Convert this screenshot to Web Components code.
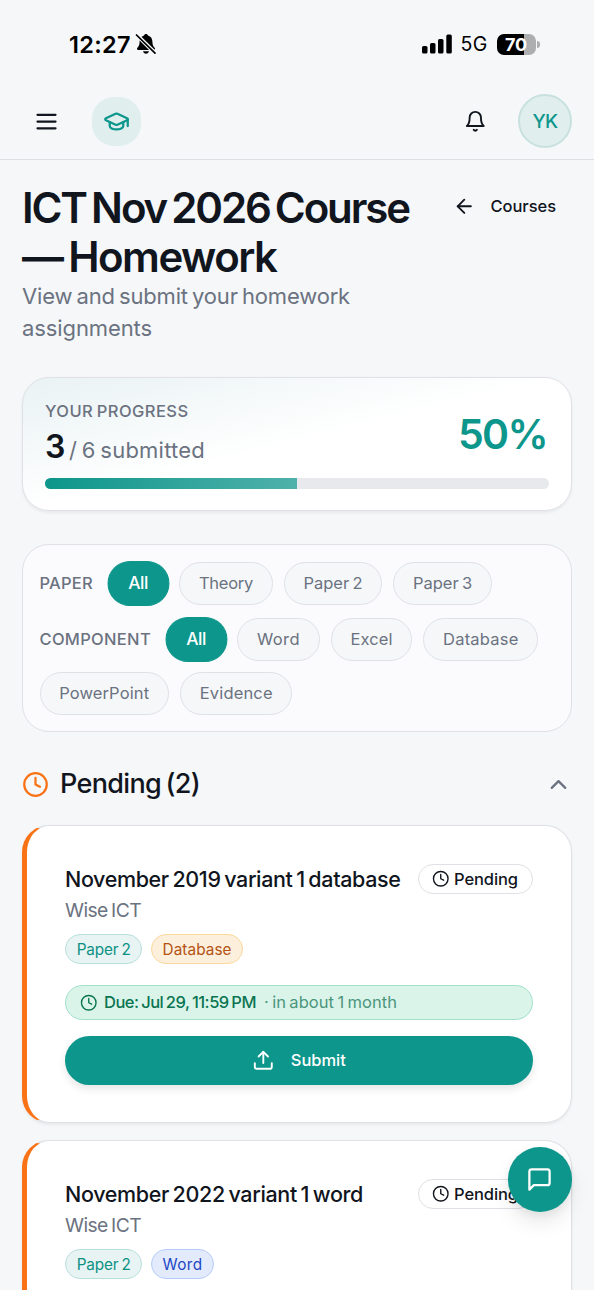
<!DOCTYPE html>
<html lang="en">
<head>
    <meta charset="UTF-8">
    <meta name="viewport" content="width=device-width, initial-scale=1.0">
    <title>Homework</title>
    <style>
        :root{
            --teal: #0d968b;
            --ink: #11151d;
            --muted: #6b7280;
            --line: #dfe1e6;
        }
        body{
            margin: 0;
            height: 1290px;
            overflow: hidden;
            position: relative;
            background: #f5f7f9;
            color: var(--ink);
            font-family: Inter, "Liberation Sans", sans-serif;
        }
        main{
            display: flex;
            flex-direction: column;
            padding: 23px 22px 0;
        }
        page-title{ margin-bottom: 33.5px; }
        progress-card{ margin-bottom: 33px; }
        filter-panel{ margin-bottom: 31px; }
        section-head{ margin-bottom: 20px; }
        homework-card{ margin-bottom: 17px; }
        /* the last card runs on under the bottom edge */
        homework-card:last-child{ height: 150px; margin-bottom: 0; border-bottom: 0; border-radius: 27px 27px 0 0; }
    </style>
</head>
<body>
    <status-bar></status-bar>
    <app-header></app-header>
    <main>
        <page-title></page-title>
        <progress-card></progress-card>
        <filter-panel>
            <filter-row>
                <fit-text size="16.5" w="53.5" weight="500">PAPER</fit-text>
                <filter-chip active w="20">All</filter-chip>
                <filter-chip w="54">Theory</filter-chip>
                <filter-chip w="59">Paper 2</filter-chip>
                <filter-chip w="59">Paper 3</filter-chip>
            </filter-row>
            <filter-row>
                <fit-text size="16.5" w="111.5" weight="500">COMPONENT</fit-text>
                <filter-chip active w="20">All</filter-chip>
                <filter-chip w="43">Word</filter-chip>
                <filter-chip w="42">Excel</filter-chip>
                <filter-chip w="75.5">Database</filter-chip>
                <filter-chip w="90">PowerPoint</filter-chip>
                <filter-chip w="73">Evidence</filter-chip>
            </filter-row>
        </filter-panel>
        <section-head></section-head>
        <homework-card>
            <fit-text slot="title" size="21.5" w="335.5" weight="500">November 2019 variant 1 database</fit-text>
            <tag-chip slot="tags" w="54">Paper 2</tag-chip>
            <tag-chip slot="tags" kind="database" w="69">Database</tag-chip>
            <due-actions></due-actions>
        </homework-card>
        <homework-card>
            <fit-text slot="title" size="21.5" w="298" weight="500">November 2022 variant 1 word</fit-text>
            <tag-chip slot="tags" w="54">Paper 2</tag-chip>
            <tag-chip slot="tags" kind="word" w="40">Word</tag-chip>
        </homework-card>
    </main>
    <chat-button></chat-button>
</body>
<script>
    const icons = {
        menu: '<path d="M4 6h16M4 12h16M4 18h16"/>',
        cap: '<path d="M21.42 10.922a1 1 0 0 0-.019-1.838L12.83 5.18a2 2 0 0 0-1.66 0L2.6 9.08a1 1 0 0 0 0 1.832l8.57 3.908a2 2 0 0 0 1.66 0z"/><path d="M22 10v6"/><path d="M6 12.5V16a6 3 0 0 0 12 0v-3.5"/>',
        bell: '<path d="M6 8a6 6 0 0 1 12 0c0 7 3 9 3 9H3s3-2 3-9"/><path d="M10.3 21a1.94 1.94 0 0 0 3.4 0"/>',
        back: '<path d="m12 19-7-7 7-7"/><path d="M19 12H5"/>',
        clock: '<circle cx="12" cy="12" r="10"/><path d="M12 6v6l4 2"/>',
        up: '<path d="m18 15-6-6-6 6"/>',
        upload: '<path d="M21 15v4a2 2 0 0 1-2 2H5a2 2 0 0 1-2-2v-4"/><path d="m17 8-5-5-5 5"/><path d="M12 3v12"/>',
        chat: '<path d="M21 15a2 2 0 0 1-2 2H7l-4 4V5a2 2 0 0 1 2-2h14a2 2 0 0 1 2 2z"/>'
    };

    class BaseElement extends HTMLElement{
        constructor(){
            super();
            this.attachShadow({mode:'open'});
        }
        connectedCallback(){
            this.shadowRoot.innerHTML = this.render();
        }
        attr(name, fallback){
            return this.getAttribute(name) || fallback;
        }
    }

    // one line of text, tracked so that it fills the width in "w"
    class FitText extends BaseElement{
        render(){
            const size = this.attr('size', 16);
            return `
                <style>
                    :host{ display:block; flex:none; width:${this.attr('w', 100)}px; white-space:nowrap; word-spacing:-0.08em;
                        font-size:${size}px; font-weight:${this.attr('weight', 400)}; line-height:${this.attr('lh', Math.round(size * 1.4))}px; }
                    span{ display:inline-block; }
                </style>
                <span><slot></slot></span>`;
        }
        connectedCallback(){
            super.connectedCallback();
            const span = this.shadowRoot.querySelector('span');
            const count = this.textContent.length;
            const gap = (this.attr('w', 100) - span.getBoundingClientRect().width) / count;
            span.style.letterSpacing = gap.toFixed(3) + 'px';
        }
    }

    class UiIcon extends BaseElement{
        render(){
            const size = this.attr('size', 24);
            return `
                <style>
                    :host{ display:block; flex:none; width:${size}px; height:${size}px; }
                    svg{ display:block; }
                </style>
                <svg width="${size}" height="${size}" viewBox="0 0 24 24" fill="none" stroke="currentColor"
                    stroke-width="${this.attr('stroke', 2)}" stroke-linecap="round" stroke-linejoin="round">${icons[this.attr('name')]}</svg>`;
        }
    }

    class StatusBar extends BaseElement{
        render(){
            return `
                <style>
                    :host{ display:flex; align-items:center; box-sizing:border-box; height:83px; padding:5px 54.5px 0 69px; color:#000; }
                    .bell{ margin-left:4px; }
                    .right{ display:flex; align-items:center; margin-left:auto; }
                    .signal{ margin-right:9px; }
                    .battery{ display:flex; align-items:center; justify-content:center; box-sizing:border-box; width:39px; height:21px; margin-left:9px;
                        border-radius:7px; color:#fff; background:linear-gradient(90deg,#000 27px,#adaeb0 27px); }
                    .nub{ width:3px; height:7px; margin:0 0 0 1px; border-radius:0 3px 3px 0; background:#adaeb0; }
                </style>
                <fit-text size="23.5" w="62" weight="600">12:27</fit-text>
                <svg class="bell" width="22" height="22" viewBox="0 0 22 22">
                    <path d="M11 1c1 0 1.8.6 2 1.5 3 .9 4.4 3.2 4.4 6.3 0 3.600 1 4.600 2.200 5.900.900 1 .400 2.300-1 2.300H3.400c-1.400 0-1.900-1.300-1-2.300C3.600 13.400 4.600 12.400 4.600 8.800 4.600 5.700 6 3.400 9 2.500 9.200 1.600 10 1 11 1z"/>
                    <path d="M8 18.3h6c-.4 1.500-1.500 2.400-3 2.400s-2.600-.9-3-2.400z"/>
                    <path d="M2 2.200 20 20" stroke="#f5f7f9" stroke-width="4"/>
                    <path d="M1.5 2 20 20.2" stroke="#000" stroke-width="1.7" stroke-linecap="round"/>
                </svg>
                <div class="right">
                    <svg class="signal" width="30" height="20" viewBox="0 0 30 20">
                        <rect x="0" y="12" width="5.5" height="7.5" rx="1.6"/>
                        <rect x="8" y="9" width="5.5" height="10.5" rx="1.6"/>
                        <rect x="16" y="5" width="5.5" height="14.5" rx="1.6"/>
                        <rect x="24.3" y="0.5" width="5.5" height="19" rx="1.6"/>
                    </svg>
                    <fit-text size="19.5" w="27">5G</fit-text>
                    <div class="battery"><fit-text size="18" w="22" weight="700">70</fit-text></div>
                    <div class="nub"></div>
                </div>`;
        }
    }

    class AppHeader extends BaseElement{
        render(){
            return `
                <style>
                    :host{ display:flex; align-items:center; box-sizing:border-box; height:77px; padding:0 22px 0 32.5px; border-bottom:1px solid #dcdfe3; }
                    .logo{ display:flex; align-items:center; justify-content:center; width:49px; height:49px; margin-left:32.5px;
                        border-radius:22px; background:#e0eeee; color:var(--teal); }
                    .bell{ margin-left:auto; margin-right:31.5px; }
                    .avatar{ display:flex; align-items:center; justify-content:center; box-sizing:border-box; width:54px; height:54px;
                        border:2.5px solid #c8e1df; border-radius:50%; background:#e0eeee; color:var(--teal); }
                </style>
                <ui-icon name="menu" size="27"></ui-icon>
                <div class="logo"><ui-icon name="cap" size="27"></ui-icon></div>
                <ui-icon class="bell" name="bell" size="22.6"></ui-icon>
                <div class="avatar"><fit-text size="19" w="25" weight="500">YK</fit-text></div>`;
        }
    }

    class PageTitle extends BaseElement{
        render(){
            return `
                <style>
                    :host{ display:flex; justify-content:space-between; align-items:flex-start; }
                    h1{ margin:0; font-weight:inherit; }
                    p{ margin:-1.5px 0 0; color:var(--muted); }
                    .back{ display:flex; align-items:center; gap:14.5px; height:47px; padding-right:16px; }
                </style>
                <div>
                    <h1>
                        <fit-text size="42" lh="49" w="387" weight="600">ICT Nov 2026 Course</fit-text>
                        <fit-text size="42" lh="49" w="254.5" weight="600">— Homework</fit-text>
                    </h1>
                    <p>
                        <fit-text size="22" lh="32" w="328">View and submit your homework</fit-text>
                        <fit-text size="22" lh="32" w="130">assignments</fit-text>
                    </p>
                </div>
                <div class="back">
                    <ui-icon name="back" size="22.6"></ui-icon>
                    <fit-text size="16.5" w="65.5" weight="500">Courses</fit-text>
                </div>`;
        }
    }

    class ProgressCard extends BaseElement{
        render(){
            return `
                <style>
                    :host{ display:block; box-sizing:border-box; height:134px; padding:21px 22px; border:1px solid var(--line); border-radius:27px;
                        background:linear-gradient(166deg,#e9f2f4 0%,#fff 50%); box-shadow:0 1.5px 3px rgba(0,0,0,.06); }
                    .row{ display:flex; justify-content:space-between; align-items:center; height:70px; padding-right:2px; }
                    .label{ color:var(--muted); }
                    .count{ display:flex; align-items:baseline; gap:5px; height:45px; }
                    .count fit-text + fit-text{ color:var(--muted); }
                    .percent{ color:var(--teal); }
                    .track{ height:11px; margin-top:9px; border-radius:6px; background:#e8e9ed; overflow:hidden; }
                    .fill{ width:50%; height:100%; background:linear-gradient(90deg,#0d968b,#4fb1aa); }
                </style>
                <div class="row">
                    <div>
                        <fit-text class="label" size="16.5" lh="25" w="143.5" weight="500">YOUR PROGRESS</fit-text>
                        <div class="count">
                            <fit-text size="32" lh="45" w="19" weight="600">3</fit-text>
                            <fit-text size="22" lh="32" w="136">/ 6 submitted</fit-text>
                        </div>
                    </div>
                    <fit-text class="percent" size="41" w="89" weight="600">50%</fit-text>
                </div>
                <div class="track"><div class="fill"></div></div>`;
        }
    }

    class FilterPanel extends BaseElement{
        render(){
            return `
                <style>
                    :host{ display:flex; flex-direction:column; gap:13.5px; box-sizing:border-box; height:188px; padding:16.5px 16px 0 16.5px;
                        border:1px solid var(--line); border-radius:27px; background:#fbfbfd; }
                </style>
                <slot></slot>`;
        }
    }

    class FilterRow extends BaseElement{
        render(){
            return `
                <style>
                    :host{ display:flex; flex-wrap:wrap; align-items:center; gap:11px 11.2px; color:var(--muted); }
                    ::slotted(fit-text){ margin-right:4.5px; }
                </style>
                <slot></slot>`;
        }
    }

    class FilterChip extends BaseElement{
        render(){
            return `
                <style>
                    :host{ display:flex; align-items:center; box-sizing:border-box; height:43px; padding:0 18.7px; border:1px solid var(--line);
                        border-radius:22px; background:#f5f7f9; }
                    :host([active]){ border-color:var(--teal); background:var(--teal); color:#fff; transform:scale(1.05); }
                </style>
                <fit-text size="16.5" w="${this.attr('w')}" weight="${this.hasAttribute('active') ? 500 : 400}">${this.textContent}</fit-text>`;
        }
    }

    class SectionHead extends BaseElement{
        render(){
            return `
                <style>
                    :host{ display:flex; align-items:center; height:42px; }
                    .clock{ color:#f97316; margin-right:11px; }
                    .up{ margin-left:auto; color:var(--muted); }
                </style>
                <ui-icon class="clock" name="clock" size="27"></ui-icon>
                <fit-text size="27" w="140" weight="500">Pending (2)</fit-text>
                <ui-icon class="up" name="up" size="27"></ui-icon>`;
        }
    }

    class TagChip extends BaseElement{
        render(){
            return `
                <style>
                    :host{ display:flex; align-items:center; box-sizing:border-box; height:30px; padding:0 10.7px; border:1px solid #b9dfdb;
                        border-radius:15px; background:#e7f4f3; color:#0d9084; }
                    :host([kind="database"]){ border-color:#fbd89b; background:#fcefdc; color:#b45314; }
                    :host([kind="word"]){ border-color:#b5cdf8; background:#e2eafc; color:#1d46c4; }
                </style>
                <fit-text size="15.3" w="${this.attr('w')}">${this.textContent}</fit-text>`;
        }
    }

    class HomeworkCard extends BaseElement{
        render(){
            return `
                <style>
                    :host{ display:flex; flex-direction:column; box-sizing:border-box; height:298px; padding:37px 38px 0; border:1px solid var(--line);
                        border-left:5px solid #f97316; border-radius:27px; background:#fff; box-shadow:0 1.5px 3px rgba(0,0,0,.06); }
                    .top{ display:flex; align-items:center; justify-content:space-between; height:32px; }
                    .badge{ display:flex; align-items:center; gap:5px; box-sizing:border-box; height:30px; padding:0 14px 0 12.5px; border:1px solid var(--line); border-radius:15px; }
                    .by{ color:var(--muted); }
                    .tags{ display:flex; gap:8.5px; margin-top:9px; }
                </style>
                <div class="top">
                    <slot name="title"></slot>
                    <div class="badge">
                        <ui-icon name="clock" size="17.5" stroke="1.9"></ui-icon>
                        <fit-text size="16.5" w="64" weight="500">Pending</fit-text>
                    </div>
                </div>
                <fit-text class="by" size="19.3" lh="30" w="76">Wise ICT</fit-text>
                <div class="tags"><slot name="tags"></slot></div>
                <slot></slot>`;
        }
    }

    class DueActions extends BaseElement{
        render(){
            return `
                <style>
                    :host{ display:block; margin-top:21px; }
                    .due{ display:flex; align-items:center; box-sizing:border-box; height:35px; padding-left:13.5px;
                        border:1px solid #a3e0cb; border-radius:18px; background:#daf4ea; color:#0a7450; }
                    .date{ margin:0 8px 0 7px; }
                    .left{ color:#4b967c; }
                    .submit{ display:flex; align-items:center; justify-content:center; gap:16px; height:49px; margin-top:16px;
                        border-radius:25px; background:var(--teal); color:#fff; box-shadow:0 4px 8px rgba(0,0,0,.1); }
                </style>
                <div class="due">
                    <ui-icon name="clock" size="17.5" stroke="1.9"></ui-icon>
                    <fit-text class="date" size="16.5" w="152" weight="500">Due: Jul 29, 11:59 PM</fit-text>
                    <fit-text class="left" size="16.5" w="133">· in about 1 month</fit-text>
                </div>
                <div class="submit">
                    <ui-icon name="upload" size="22.6"></ui-icon>
                    <fit-text size="16.5" w="55" weight="500">Submit</fit-text>
                </div>`;
        }
    }

    class ChatButton extends BaseElement{
        render(){
            return `
                <style>
                    :host{ position:absolute; right:22px; top:1147px; display:flex; align-items:center; justify-content:center; width:64.5px; height:64.5px;
                        border-radius:50%; background:var(--teal); color:#fff; box-shadow:0 12px 20px rgba(0,0,0,.08), 0 4px 8px rgba(0,0,0,.06); }
                </style>
                <ui-icon name="chat" size="27"></ui-icon>`;
        }
    }

    customElements.define('fit-text',FitText)
    customElements.define('ui-icon',UiIcon)
    customElements.define('status-bar',StatusBar)
    customElements.define('app-header',AppHeader)
    customElements.define('page-title',PageTitle)
    customElements.define('progress-card',ProgressCard)
    customElements.define('filter-panel',FilterPanel)
    customElements.define('filter-row',FilterRow)
    customElements.define('filter-chip',FilterChip)
    customElements.define('section-head',SectionHead)
    customElements.define('tag-chip',TagChip)
    customElements.define('homework-card',HomeworkCard)
    customElements.define('due-actions',DueActions)
    customElements.define('chat-button',ChatButton)
</script>
</html>
